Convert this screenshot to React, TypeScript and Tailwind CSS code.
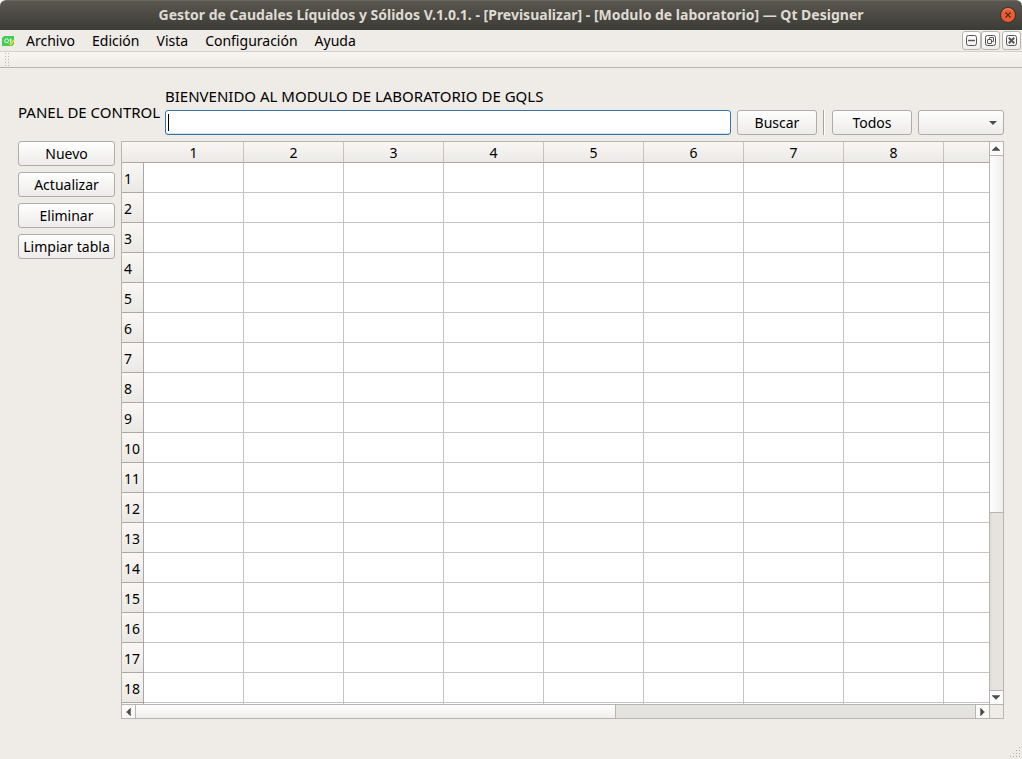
import type { ReactNode } from "react";

const menus = ["Archivo", "Edición", "Vista", "Configuración", "Ayuda"];
const actions = ["Nuevo", "Actualizar", "Eliminar", "Limpiar tabla"];
const columns = ["1", "2", "3", "4", "5", "6", "7", "8", ""];
const rows = [...Array.from({ length: 18 }, (_, i) => String(i + 1)), ""];

function PushButton({ children, className = "" }: { children: ReactNode; className?: string }) {
  return (
    <button
      type="button"
      className={`h-[25px] whitespace-nowrap rounded-[3px] border border-[#b0aca9] bg-linear-to-b from-[#fefefe] to-[#eeecea] text-center leading-[23px] ${className}`}
    >
      {children}
    </button>
  );
}

function TitleBar() {
  return (
    <div className="bg-white">
      <header className="flex h-[30px] items-center rounded-t-[6px] border-t border-[#69675f] bg-linear-to-b from-[#59574f] to-[#3d3b37] pr-[6px] pb-px pl-[22px]">
        <h1 className="flex-1 truncate text-center text-[14px] leading-5 font-bold text-[#dfdbd2]">
          Gestor de Caudales Líquidos y Sólidos V.1.0.1. - [Previsualizar] - [Modulo de laboratorio] — Qt Designer
        </h1>
        <button type="button" aria-label="Cerrar" className="size-4">
          <svg viewBox="0 0 16 16" className="size-4">
            <circle cx="8" cy="8" r="7.5" fill="#ed5c30" stroke="#35332f" />
            <path d="M3 4.2A6.3 6.3 0 0 1 13 4.2" fill="none" stroke="#f58b66" strokeWidth="1" />
            <path d="M5.5 5.5l5 5M10.5 5.5l-5 5" stroke="#4a2b20" strokeWidth="1.3" />
          </svg>
        </button>
      </header>
    </div>
  );
}

function WindowButton({ label, children }: { label: string; children: ReactNode }) {
  return (
    <button
      type="button"
      aria-label={label}
      className="flex size-[19px] items-center justify-center rounded-[3px] border border-[#b8b4b0] bg-linear-to-b from-white to-[#f0eeec]"
    >
      <svg viewBox="0 0 11 11" className="size-[11px]" fill="none" stroke="#555555">
        <rect x=".5" y=".5" width="10" height="10" rx="2" />
        {children}
      </svg>
    </button>
  );
}

function MenuBar() {
  return (
    <div className="flex h-[22px] items-center border-b border-[#d3cfcb] pr-px pl-[2px]">
      <svg viewBox="0 0 13 12" className="mr-[11px] h-3 w-[13px]">
        <path d="M2 1h10v8l-2 2H0V3z" fill="#41cd52" />
        <circle cx="4.6" cy="5.7" r="1.9" fill="none" stroke="#e9fbe9" />
        <path d="M5 7l1.3 1.5M8.6 3.5v4.2h1.2M7.3 5h2.8" fill="none" stroke="#e9fbe9" />
        <path d="M12 5.4L7.6 10.4" stroke="#f3d23c" strokeWidth="1.8" />
        <path d="M7.6 9.6l-.8 1.7 1.8-.8z" fill="#c8864a" />
      </svg>
      <nav className="flex flex-1 gap-[17px]">
        {menus.map((m) => (
          <button key={m} type="button" className="leading-5">
            {m}
          </button>
        ))}
      </nav>
      <div className="flex">
        <WindowButton label="Minimizar">
          <path d="M2 5.5h7" strokeWidth="1.4" />
        </WindowButton>
        <WindowButton label="Restaurar">
          <rect x="4.5" y="2.5" width="4" height="4" rx=".5" />
          <rect x="2.5" y="4.5" width="4" height="4" rx=".5" fill="#f6f5f4" />
        </WindowButton>
        <div className="w-[2px]" />
        <WindowButton label="Cerrar ventana">
          <path d="M2.8 2.8l5.4 5.4M8.2 2.8L2.8 8.2" strokeWidth="2" />
        </WindowButton>
      </div>
    </div>
  );
}

function ToolBar() {
  return (
    <div className="flex h-4 border-b border-[#b8b4b0] bg-linear-to-b from-[#f7f5f2] to-[#efebe7] pl-[5px]">
      <svg viewBox="0 0 4 15" className="h-[15px] w-1" fill="#b5b1ad">
        {[1, 4, 7, 10, 13].map((y) => (
          <g key={y}>
            <rect x="0" y={y} width="1" height="1" />
            <rect x="3" y={y} width="1" height="1" />
          </g>
        ))}
      </svg>
    </div>
  );
}

const arrows = {
  up: "M4 0h1v1h1v1h1v1h1v1h1v1H0V4h1V3h1V2h1V1h1z",
  down: "M0 0h9v1H8v1H7v1H6v1H5v1H4V4H3V3H2V2H1V1H0z",
  left: "M0 4h1V3h1V2h1V1h1V0h1v9H4V8H3V7H2V6H1V5H0z",
  right: "M5 4H4V3H3V2H2V1H1V0H0v9h1V8h1V7h1V6h1V5h1z",
};

function Arrow({ to }: { to: "up" | "down" | "left" | "right" }) {
  const tall = to === "left" || to === "right";
  return (
    <svg viewBox={tall ? "0 0 5 9" : "0 0 9 5"} className={tall ? "mr-px h-[8px] w-[5px]" : "mr-px h-[5px] w-[8px]"} fill="#4c4c4c">
      <path d={arrows[to]} />
    </svg>
  );
}

function VerticalScroll() {
  return (
    <div className="flex w-[14px] flex-col border-l border-[#b8b4b1]">
      <button type="button" aria-label="Subir" className="flex h-[14px] items-center justify-center border-b border-[#b8b4b1] bg-[#fbfaf9]">
        <Arrow to="up" />
      </button>
      <div className="flex flex-1 flex-col">
        <div className="flex-[357] border-b border-[#b8b4b1] bg-linear-to-r from-[#fefefe] to-[#f0eeec]" />
        <div className="flex-[177] bg-linear-to-r from-[#d8d7d4] via-[#e4e3df] via-15% to-[#e4e3df]" />
      </div>
      <button type="button" aria-label="Bajar" className="flex h-[14px] items-center justify-center border-t border-[#b8b4b1] bg-[#fbfaf9]">
        <Arrow to="down" />
      </button>
    </div>
  );
}

function HorizontalScroll() {
  return (
    <div className="flex h-[14px] border-t border-[#b8b4b1]">
      <button type="button" aria-label="Izquierda" className="flex w-[14px] items-center justify-center border-r border-[#b8b4b1] bg-[#fbfaf9]">
        <Arrow to="left" />
      </button>
      <div className="flex flex-1">
        <div className="flex-[480] border-r border-[#b8b4b1] bg-linear-to-b from-[#fefefe] to-[#f0eeec]" />
        <div className="flex-[359] bg-[#e4e3df]" />
      </div>
      <button type="button" aria-label="Derecha" className="flex w-[14px] items-center justify-center border-l border-[#b8b4b1] bg-[#fbfaf9]">
        <Arrow to="right" />
      </button>
      <div className="w-[14px] border-l border-[#b8b4b1] bg-[#efebe7]" />
    </div>
  );
}

function DataTable() {
  return (
    <div className="flex min-h-0 min-w-0 flex-1 flex-col border border-[#b8b4b1] bg-white">
      <div className="flex min-h-0 flex-1">
        <div className="min-w-0 flex-1 overflow-hidden">
          <table className="w-[922px] table-fixed border-separate border-spacing-0">
            <thead>
              <tr className="h-[21px] bg-linear-to-b from-[#f9f6f3] to-[#ebe9e6]">
                <td className="w-[22px] border-b border-[#aba7a4] p-0" />
                {columns.map((c, i) => (
                  <th
                    key={i}
                    scope="col"
                    className="border-r border-b border-r-[#c6c3c0] border-b-[#aba7a4] p-0 pt-[2px] leading-[18px] font-normal"
                  >
                    {c}
                  </th>
                ))}
              </tr>
            </thead>
            <tbody>
              {rows.map((r, i) => (
                <tr key={i} className="h-[30px]">
                  <th
                    scope="row"
                    className="border-r border-b border-[#aba7a4] bg-linear-to-b from-[#f9f6f3] to-[#ebe9e6] p-0 pt-[2px] pl-[2px] text-left leading-5 font-normal"
                  >
                    {r}
                  </th>
                  {columns.map((_, j) => (
                    <td key={j} className="border-r border-b border-[#c6c3c2] p-0" />
                  ))}
                </tr>
              ))}
            </tbody>
          </table>
        </div>
        <VerticalScroll />
      </div>
      <HorizontalScroll />
    </div>
  );
}

function SearchRow() {
  return (
    <div className="flex items-center gap-[7px]">
      <h2 className="w-[140px] pt-[2px] text-[15px] leading-5 whitespace-nowrap">PANEL DE CONTROL</h2>
      <div className="min-w-0 flex-1">
        <label htmlFor="search" className="block h-[24px] text-[15px] leading-5 whitespace-nowrap">
          BIENVENIDO AL MODULO DE LABORATORIO DE GQLS
        </label>
        <div className="flex">
          <div className="relative min-w-0 flex-1">
            <input
              id="search"
              type="text"
              className="block h-[25px] w-full rounded-[3px] border border-[#2f74a5] bg-white px-1 caret-transparent shadow-[inset_0_-1px_0_#d7e3ec] outline-none"
            />
            <span className="pointer-events-none absolute top-1 left-[3px] h-[17px] w-px bg-black" />
          </div>
          <PushButton className="ml-[6px] w-20">Buscar</PushButton>
          <div className="mr-[7px] ml-[6px] w-[2px] border-r border-l border-r-white border-l-[#a5a19e]" />
          <PushButton className="w-20">Todos</PushButton>
          <div className="relative ml-[6px] w-[86px]">
            <select
              aria-label="Filtro"
              className="block h-[25px] w-full appearance-none rounded-[3px] border border-[#b0aca9] bg-linear-to-b from-[#fefefe] to-[#eeecea]"
            />
            <span className="pointer-events-none absolute top-[11px] right-[7px] flex">
              <svg viewBox="0 0 8 4" className="h-1 w-2" fill="#4c4c4c">
                <path d="M0 0h8L4 4z" />
              </svg>
            </span>
          </div>
        </div>
      </div>
    </div>
  );
}

function SizeGrip() {
  const dots = [
    [9, 0], [6, 3], [9, 3], [3, 6], [6, 6], [9, 6], [0, 9], [3, 9], [6, 9], [9, 9],
  ];
  return (
    <svg viewBox="0 0 10 10" className="size-[10px]" fill="#b5b1ad">
      {dots.map(([x, y]) => (
        <rect key={`${x}-${y}`} x={x} y={y} width="1" height="1" />
      ))}
    </svg>
  );
}

export default function App() {
  return (
    <div className="flex h-screen flex-col bg-[#efebe7] font-['Noto_Sans','Open_Sans',sans-serif] text-[14px] text-black">
      <TitleBar />
      <MenuBar />
      <ToolBar />
      <main className="flex min-h-0 flex-1 flex-col gap-[6px] px-[18px] pt-[18px]">
        <SearchRow />
        <div className="flex min-h-0 flex-1 gap-[6px]">
          <div className="flex w-[97px] flex-col gap-[6px]">
            {actions.map((a) => (
              <PushButton key={a}>{a}</PushButton>
            ))}
          </div>
          <DataTable />
        </div>
      </main>
      <footer className="flex h-10 items-end justify-end pr-[2px] pb-[2px]">
        <SizeGrip />
      </footer>
    </div>
  );
}
